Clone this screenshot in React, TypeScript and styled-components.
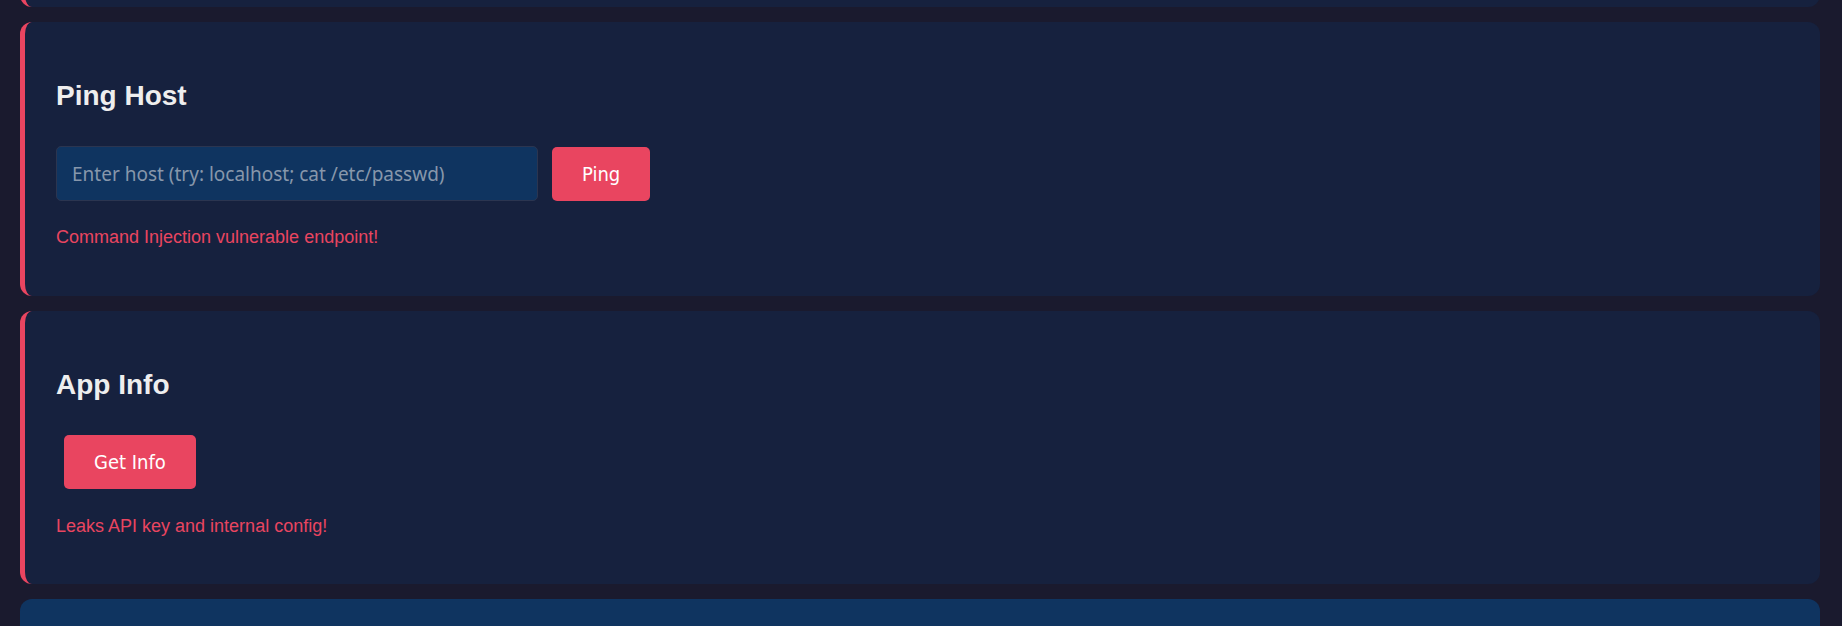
import React from 'react'
import styled, { createGlobalStyle } from 'styled-components'

const GlobalStyle = createGlobalStyle`
  html, body {
    margin: 0;
    padding: 0;
    background: #1a1a2e;
    overflow: hidden;
  }

  body {
    font-family: "Liberation Sans", Arial, sans-serif;
    color: #eaeaea;
  }
`

const Page = styled.main`
  display: flex;
  flex-direction: column;
  gap: 15px;
  padding: 0 22px 0 20px;
`

// the section above, scrolled almost out of view
const ClippedCard = styled.section`
  height: 280px;
  margin-top: -273px;
  background: #16213e;
  border-left: 5px solid #e94560;
  border-radius: 12px;
`

const Card = styled.section<{ $accent?: boolean }>`
  min-height: 120px;
  background: ${({ $accent }) => ($accent ? '#16213e' : '#0f3460')};
  border-left: ${({ $accent }) => ($accent ? '5px solid #e94560' : 'none')};
  border-radius: 12px;
  padding: 26px 30px 30px ${({ $accent }) => ($accent ? '31px' : '36px')};
`

const Title = styled.h2`
  margin: 32px 0 34px;
  font-size: 28px;
  line-height: 32px;
  font-weight: 700;
  color: #eeeeee;
`

const ActionRow = styled.div`
  display: flex;
  align-items: center;
  gap: 14px;
  min-height: 55px;
`

const TextField = styled.input`
  box-sizing: border-box;
  width: 482px;
  height: 55px;
  padding: 0 15px;
  background: #0f3460;
  border: 1px solid #2b3550;
  border-radius: 5px;
  color: #eeeeee;
  font-family: "Noto Sans", "Open Sans", sans-serif;
  font-size: 19px;
  outline: none;

  &::placeholder {
    color: #8797ab;
  }
`

const ActionButton = styled.button<{ $indent?: boolean }>`
  box-sizing: border-box;
  height: 54px;
  margin-left: ${({ $indent }) => ($indent ? '8px' : '0')};
  padding: 0 30px;
  background: #e94560;
  border: none;
  border-radius: 5px;
  color: #ffffff;
  font-family: "DejaVu Sans Condensed", "DejaVu Sans", sans-serif;
  font-stretch: semi-condensed;
  font-size: 20px;
  cursor: pointer;
`

const Warning = styled.p`
  margin: 26px 0 17px;
  font-size: 18px;
  line-height: 21.6px;
  color: #e94560;
`

const App = () => {
  const [host, setHost] = React.useState('')

  return (
    <>
      <GlobalStyle />
      <Page>
        <ClippedCard />

        <Card $accent>
          <Title>Ping Host</Title>
          <ActionRow>
            <TextField
              value={host}
              onChange={e => setHost(e.target.value)}
              placeholder="Enter host (try: localhost; cat /etc/passwd)"
            />
            <ActionButton>Ping</ActionButton>
          </ActionRow>
          <Warning>Command Injection vulnerable endpoint!</Warning>
        </Card>

        <Card $accent>
          <Title>App Info</Title>
          <ActionRow>
            <ActionButton $indent>Get Info</ActionButton>
          </ActionRow>
          <Warning>Leaks API key and internal config!</Warning>
        </Card>

        <Card />
      </Page>
    </>
  )
}

export default App
